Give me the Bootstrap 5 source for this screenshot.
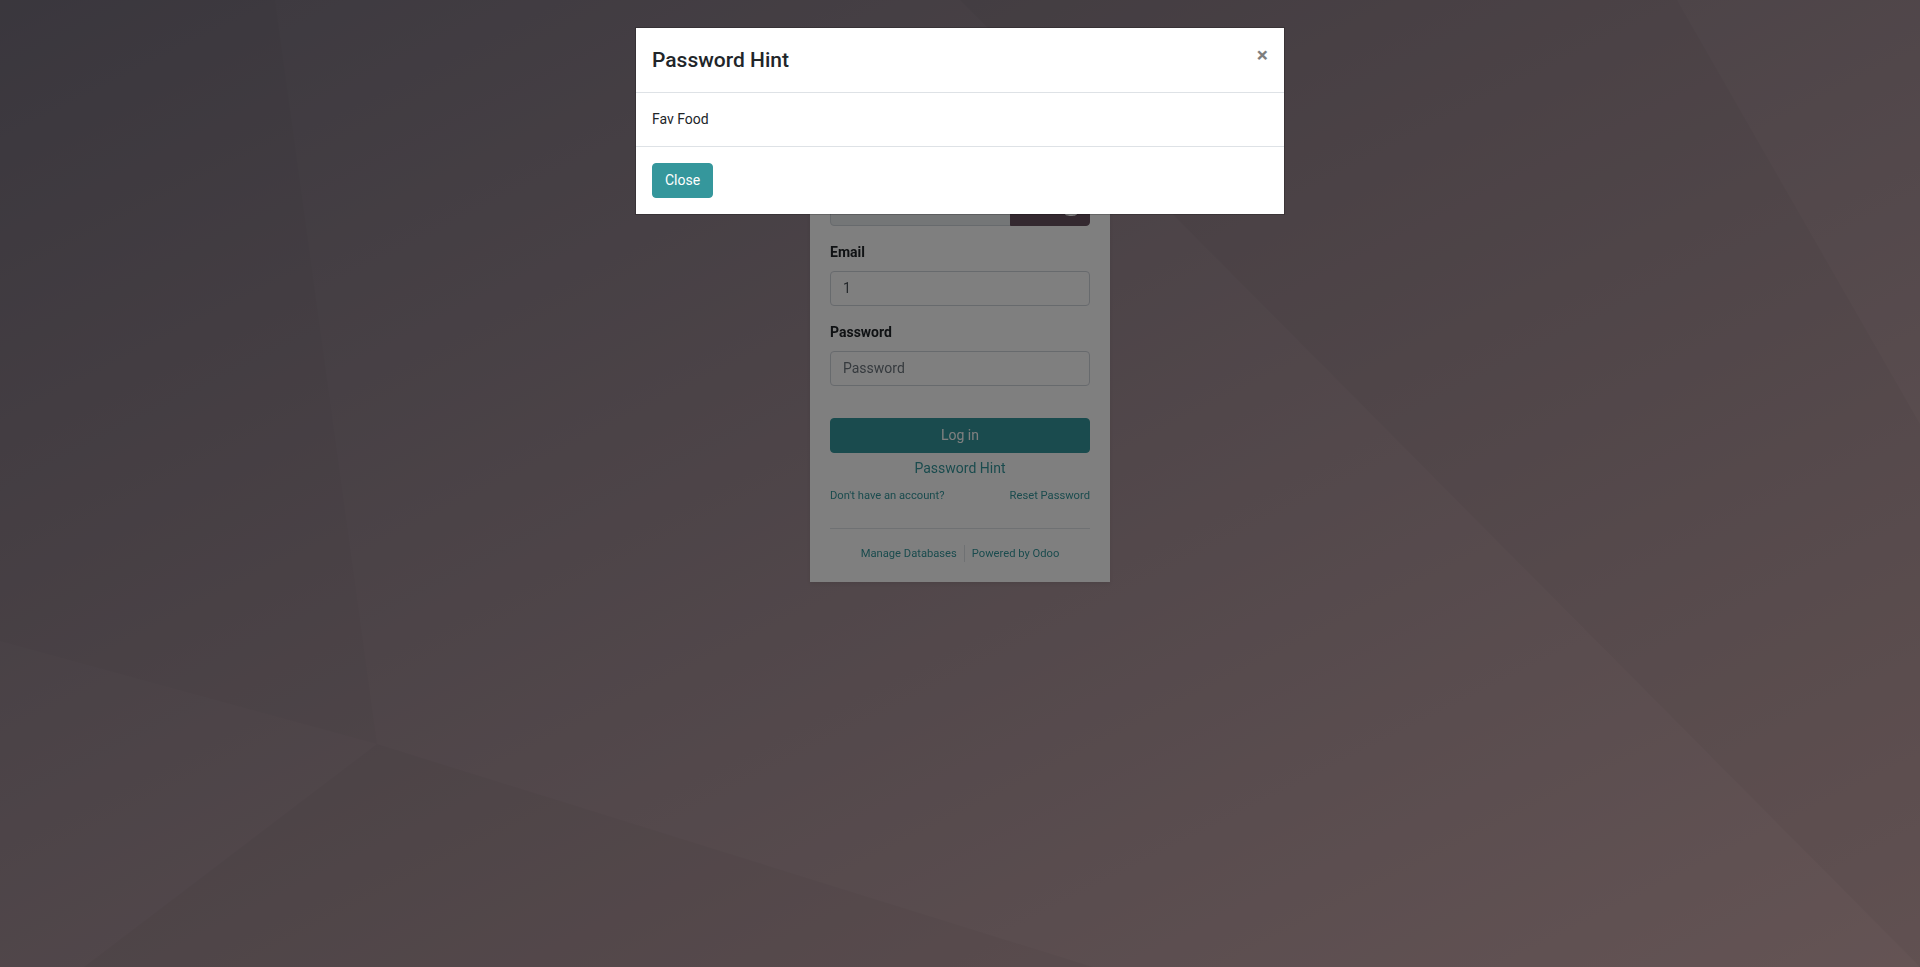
<!DOCTYPE html>
<html lang="en">
<head>
<meta charset="utf-8">
<title>Login</title>
<link rel="stylesheet" href="https://cdn.jsdelivr.net/npm/bootstrap@5.3.0/dist/css/bootstrap.min.css">
<style>
:root{--brand:#35979c}
body{font-family:Roboto,"Liberation Sans",sans-serif;font-size:14px;line-height:1.5;color:#212529;background:linear-gradient(to right bottom,#77717e,#c9a8a9) fixed;min-height:100vh;overflow:hidden}
.bg-shapes{position:fixed;inset:0;width:100%;height:100%}
.login-card{width:300px;height:527px;margin-top:55px;padding:20px;border:0;border-radius:0;position:relative;box-shadow:0 2px 4px rgba(0,0,0,.075)}
.login-card a{color:var(--brand);text-decoration:none}
.login-logo{height:87px}
.form-control{font-size:14px;height:35px;border-color:#ced4da;border-radius:4px;padding:5px 12px 7px;color:#495057;line-height:21px}
.form-control[readonly]{background:#e9ecef}
.form-control::placeholder{color:#6c757d}
.form-label{font-weight:700;margin-bottom:8px;line-height:21px;display:block}
.field{margin-bottom:16px}
.btn{font-size:14px;border-radius:4px;padding:6px 12px;line-height:21px}
.btn-brand,.btn-brand:hover{background:var(--brand);border-color:var(--brand);color:#fff}
.btn-select,.btn-select:hover{background:#685260;color:#fff;width:80px;padding:6px 12px;border:1px solid #685260;white-space:nowrap;display:flex;align-items:center;justify-content:space-between}
.hint-link{padding-top:5px}
.tiny{font-size:11.2px;line-height:17px}
.footer-sep{padding-right:7px;margin-right:7px}
.modal-dialog{width:650px;max-width:650px;margin:27px auto}
.modal-content{border:1px solid rgba(0,0,0,.2);border-radius:0;background-clip:padding-box}
.modal-header{height:65px;padding:16px;border-color:#dee2e6;border-radius:0;align-items:flex-start}
.modal-title{font-size:21px;font-weight:500;line-height:33px}
.modal-body{padding:16px;height:53px}
.modal-footer{padding:16px;border-color:#dee2e6;border-radius:0;justify-content:flex-start}
.close-x{border:0;background:none;padding:0;font-size:21px;font-weight:700;line-height:23px;color:#000;opacity:.5}
.modal-backdrop{--bs-backdrop-opacity:.5}
</style>
</head>
<body>
<svg class="bg-shapes" viewBox="0 0 1920 967" preserveAspectRatio="none" aria-hidden="true">
<path d="M275 0 377 744 0 641V0z" fill="#000" fill-opacity=".018"/>
<path d="M377 744 1093 967H84z" fill="#000" fill-opacity=".028"/>
<path d="M960 0H1677L1920 424V967z" fill="#000" fill-opacity=".03"/>
</svg>
<main class="d-flex justify-content-center">
<form class="card login-card">
<div class="login-logo"></div>
<div class="field">
<label class="form-label" for="db">Database</label>
<div class="input-group flex-nowrap"><input id="db" class="form-control" readonly><button type="button" class="btn btn-select"><span>Select</span><svg width="12" height="14" viewBox="0 0 12 14" fill="currentColor" aria-hidden="true"><path d="M0 2c0-1.100 2.700-2 6-2s6 .9 6 2v1c0 1.100-2.700 2-6 2s-6-.9-6-2zM0 4.700C1.300 5.600 3.600 6 6 6s4.700-.4 6-1.300V6c0 1.100-2.700 2-6 2s-6-.9-6-2zM0 7.700C1.300 8.600 3.600 9 6 9s4.700-.4 6-1.300V9c0 1.100-2.700 2-6 2s-6-.9-6-2zM0 10.700C1.300 11.600 3.600 12 6 12s4.700-.4 6-1.300V12c0 1.100-2.700 2-6 2s-6-.9-6-2z"/></svg></button></div>
</div>
<div class="field"><label class="form-label" for="email">Email</label><input id="email" class="form-control" value="1"></div>
<div class="field"><label class="form-label" for="pw">Password</label><input id="pw" type="password" class="form-control" placeholder="Password"></div>
<button type="button" class="btn btn-brand w-100 mt-3">Log in</button>
<a href="#" class="text-center hint-link">Password Hint</a>
<div class="d-flex justify-content-between tiny mt-2"><a href="#">Don't have an account?</a><a href="#">Reset Password</a></div>
<div class="border-top mt-4 pt-3 d-flex justify-content-center tiny"><a href="#" class="border-end footer-sep">Manage Databases</a><a href="#">Powered by Odoo</a></div>
</form>
</main>
<div class="modal-backdrop show"></div>
<div class="modal d-block" tabindex="-1" role="dialog">
<div class="modal-dialog"><div class="modal-content">
<header class="modal-header"><h4 class="modal-title">Password Hint</h4><button type="button" class="close-x">×</button></header>
<main class="modal-body">Fav Food</main>
<footer class="modal-footer"><button type="button" class="btn btn-brand m-0">Close</button></footer>
</div></div>
</div>
<script src="https://cdn.jsdelivr.net/npm/bootstrap@5.3.0/dist/js/bootstrap.bundle.min.js"></script>
</body>
</html>
